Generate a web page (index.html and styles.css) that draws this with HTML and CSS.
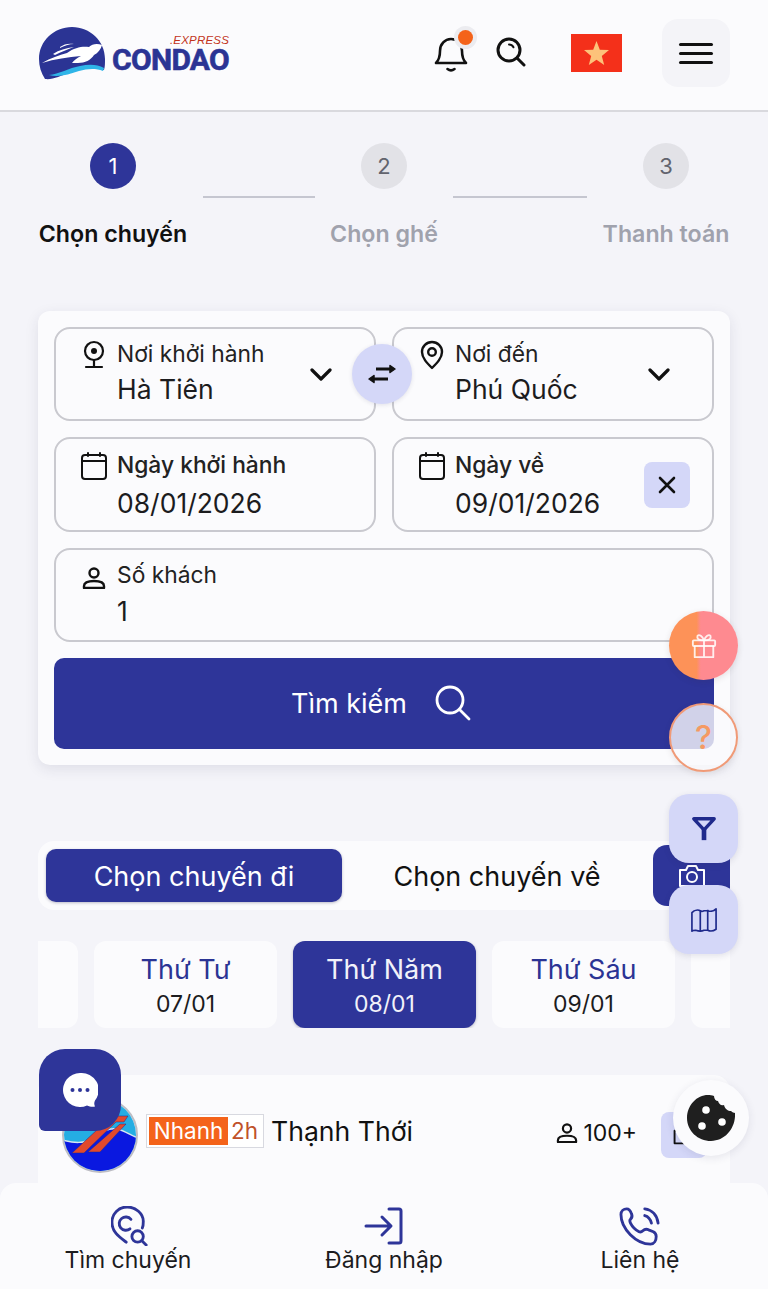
FILE: index.html
```html
<!DOCTYPE html>
<html lang="vi">
<head>
<meta charset="utf-8">
<title>Condao Express</title>
<link rel="stylesheet" href="styles.css">
</head>
<body>
<div class="page">
  <header class="header">
    <div class="logo">
      <svg class="logo-mark" viewBox="0 0 66 53" aria-hidden="true">
        <path d="M33 0C15 0 0 14 0 32c0 7 2 14 6 20 8 1 15-3 26-7 12-4 22-5 33-2 1-3 1-7 1-11C66 14 51 0 33 0z" fill="#2b3494"/>
        <path d="M10 48c10-1 20-7 31-9 9-2 17-2 24 2l-1 3c-8-3-16-2-24 0-10 3-20 7-30 4z" fill="#2fb5e8"/>
        <path d="M3 36c9-5 17-8 25-10 8-6 16-7 22-6 3-3 8-4 13-2-1 4-4 8-8 10-3 5-9 8-16 8h-6c2-3 5-5 9-7-13 1-26 3-39 7z" fill="#fff"/>
        <path d="M14 27c6-4 13-6 21-7-6 2-13 5-19 8zM21 20c4-3 9-4 14-3-5 0-10 2-14 4z" fill="#fff"/>
      </svg>
      <div class="logo-text">
        <span class="logo-express">.EXPRESS</span>
        <span class="logo-name">CONDAO</span>
      </div>
    </div>
    <div class="header-tools">
      <button class="icon-plain bell">
        <svg viewBox="0 0 34 36" width="34" height="36" fill="none" stroke="#111" stroke-width="2.600" stroke-linecap="round" stroke-linejoin="round"><path d="M2 27h30c-3-3-4-6-4-12 0-7-5-12-11-12S6 8 6 15c0 6-1 9-4 12z"/><path d="M13.500 33c2 1.500 5 1.500 7 0"/></svg>
        <span class="bell-dot"></span>
      </button>
      <button class="icon-plain search">
        <svg viewBox="0 0 30 30" width="30" height="30" fill="none" stroke="#111" stroke-width="3" stroke-linecap="round"><circle cx="13" cy="13" r="11"/><path d="M21 21l7 7"/><path d="M13 7.500c2 0 3.500 1 4.500 2.800" stroke-width="2"/></svg>
      </button>
      <svg class="flag" viewBox="0 0 51 38" aria-hidden="true"><rect width="51" height="38" fill="#f4301a"/><path d="M25.500 7l3.300 8.700 9.200.4-7.200 5.800 2.400 9-7.700-5.100-7.700 5.100 2.400-9-7.200-5.800 9.200-.4z" fill="#fdc27a"/></svg>
      <button class="menu-btn"><span></span><span></span><span></span></button>
    </div>
  </header>

  <main class="main">
    <section class="stepper">
      <div class="step active"><span class="step-num">1</span><span class="step-label">Chọn chuyến</span></div>
      <div class="step-line"></div>
      <div class="step"><span class="step-num">2</span><span class="step-label">Chọn ghế</span></div>
      <div class="step-line"></div>
      <div class="step"><span class="step-num">3</span><span class="step-label">Thanh toán</span></div>
    </section>

    <section class="search-card">
      <div class="field-grid">
        <div class="field">
          <svg class="field-icon" viewBox="0 0 26 30" fill="none" stroke="#111" stroke-width="2.200" stroke-linecap="round"><circle cx="13" cy="11" r="9"/><circle cx="13" cy="11" r="3" fill="#111" stroke="none"/><path d="M13 20v6M5 27h16"/></svg>
          <div class="field-text"><span class="field-label">Nơi khởi hành</span><span class="field-value">Hà Tiên</span></div>
          <svg class="chevron" viewBox="0 0 24 14" fill="none" stroke="#111" stroke-width="3.200" stroke-linecap="round" stroke-linejoin="round"><path d="M3 3l9 9 9-9"/></svg>
        </div>
        <div class="field">
          <svg class="field-icon" viewBox="0 0 26 30" fill="none" stroke="#111" stroke-width="2.400" stroke-linejoin="round"><path d="M13 28C8 23 3 18 3 12a10 10 0 0 1 20 0c0 6-5 11-10 16z"/><circle cx="13" cy="12" r="3.800"/></svg>
          <div class="field-text"><span class="field-label">Nơi đến</span><span class="field-value">Phú Quốc</span></div>
          <svg class="chevron" viewBox="0 0 24 14" fill="none" stroke="#111" stroke-width="3.200" stroke-linecap="round" stroke-linejoin="round"><path d="M3 3l9 9 9-9"/></svg>
        </div>
        <button class="swap">
          <svg viewBox="0 0 30 24" width="30" height="24" fill="#111" stroke="#111" stroke-width="3"><path d="M9 7h14" fill="none"/><path d="M23 3.500L28 7l-5 3.500z" stroke-width="1.500" stroke-linejoin="round"/><path d="M21 17H7" fill="none"/><path d="M7 13.500L2 17l5 3.500z" stroke-width="1.500" stroke-linejoin="round"/></svg>
        </button>
        <div class="field date">
          <svg class="field-icon" viewBox="0 0 26 28" fill="none" stroke="#111" stroke-width="2" stroke-linecap="round"><rect x="1" y="3" width="24" height="24" rx="3"/><path d="M1 9h24M7 1v3M19 1v3"/></svg>
          <div class="field-text"><span class="field-label">Ngày khởi hành</span><span class="field-value">08/01/2026</span></div>
        </div>
        <div class="field date">
          <svg class="field-icon" viewBox="0 0 26 28" fill="none" stroke="#111" stroke-width="2" stroke-linecap="round"><rect x="1" y="3" width="24" height="24" rx="3"/><path d="M1 9h24M7 1v3M19 1v3"/></svg>
          <div class="field-text"><span class="field-label">Ngày về</span><span class="field-value">09/01/2026</span></div>
          <button class="clear-btn"><svg viewBox="0 0 18 18" width="18" height="18" fill="none" stroke="#111" stroke-width="2.600" stroke-linecap="round"><path d="M2 2l14 14M16 2L2 16"/></svg></button>
        </div>
        <div class="field guests">
          <svg class="field-icon person" viewBox="0 0 24 22" fill="none" stroke="#111" stroke-width="2.400" stroke-linejoin="round"><circle cx="12" cy="6" r="4.500"/><path d="M2 21v-2c0-3 3-5 10-5s10 2 10 5v2z"/></svg>
          <div class="field-text"><span class="field-label">Số khách</span><span class="field-value">1</span></div>
        </div>
      </div>
      <button class="search-btn">
        <span>Tìm kiếm</span>
        <svg viewBox="0 0 36 36" width="36" height="36" fill="none" stroke="#fff" stroke-width="2.800" stroke-linecap="round"><circle cx="15" cy="15" r="13"/><path d="M24.500 24.500L34 34"/></svg>
      </button>
    </section>

    <section class="tabs">
      <button class="tab on">Chọn chuyến đi</button>
      <button class="tab">Chọn chuyến về</button>
      <button class="camera-btn">
        <svg viewBox="0 0 28 24" width="28" height="24" fill="none" stroke="#fff" stroke-width="2" stroke-linejoin="round"><path d="M2 6h6l2-4h8l2 4h6v16H2z"/><circle cx="14" cy="13" r="5"/></svg>
      </button>
    </section>

    <section class="days">
      <div class="day"></div>
      <div class="day"><span class="day-name">Thứ Tư</span><span class="day-date">07/01</span></div>
      <div class="day on"><span class="day-name">Thứ Năm</span><span class="day-date">08/01</span></div>
      <div class="day"><span class="day-name">Thứ Sáu</span><span class="day-date">09/01</span></div>
      <div class="day"></div>
    </section>

    <section class="trip">
      <svg class="trip-logo" viewBox="0 0 76 76" aria-hidden="true">
        <defs><clipPath id="tc"><circle cx="38" cy="38" r="36"/></clipPath></defs>
        <circle cx="38" cy="38" r="37" fill="#fff" stroke="#bdbdc4" stroke-width="2"/>
        <g clip-path="url(#tc)">
          <rect width="76" height="76" fill="#25ade3"/>
          <path d="M0 43c12 3 22 4 32-2 8-6 14-10 22-9 8 1 14 6 22 9v35H0z" fill="#0a18e0"/>
          <path d="M0 43c12 3 22 4 32-2 8-6 14-10 22-9 8 1 14 6 22 9" fill="none" stroke="#d7e6f2" stroke-width="1.500"/>
        </g>
        <path d="M10 56L50 19h16l-4 6H54L22 56zM26 55l32-28h6L38 55z" fill="#e2492c" stroke="#1b2a8c" stroke-width=".5"/>
      </svg>
      <div class="badge"><span class="badge-a">Nhanh</span><span class="badge-b">2h</span></div>
      <span class="trip-name">Thạnh Thới</span>
      <div class="seats">
        <svg viewBox="0 0 24 22" width="22" height="20" fill="none" stroke="#111" stroke-width="2.400" stroke-linejoin="round"><circle cx="12" cy="6" r="4.500"/><path d="M2 21v-2c0-3 3-5 10-5s10 2 10 5v2z"/></svg>
        <span>100+</span>
      </div>
      <button class="trip-btn">
        <svg viewBox="0 0 28 24" width="22" height="19" fill="none" stroke="#111" stroke-width="2.400" stroke-linejoin="round"><path d="M2 6h6l2-4h8l2 4h6v16H2z"/><circle cx="14" cy="13" r="5"/></svg>
      </button>
    </section>
  </main>

  <nav class="bottom-nav">
    <a class="nav-item">
      <svg class="nav-pin" viewBox="0 0 40 42" width="38" height="40" fill="none" stroke="#2e3599" stroke-width="3" stroke-linecap="round"><path d="M16 38C8 32 1 27 1 17 1 8 8 1 17 1s17 7 17 15c0 2 0 5-1 7"/><path d="M21 14a7 7 0 1 0-1 10"/><circle cx="28" cy="32" r="6"/><path d="M32.500 36.500L37 41"/></svg>
      <span>Tìm chuyến</span>
    </a>
    <a class="nav-item">
      <svg viewBox="0 0 40 40" width="40" height="40" fill="none" stroke="#2e3599" stroke-width="3" stroke-linecap="round" stroke-linejoin="round"><path d="M25 3h10a2 2 0 0 1 2 2v30a2 2 0 0 1-2 2H25"/><path d="M2 20h24M18 11l9 9-9 9"/></svg>
      <span>Đăng nhập</span>
    </a>
    <a class="nav-item">
      <svg viewBox="0 0 44 42" width="44" height="40" fill="none" stroke="#2e3599" stroke-width="3" stroke-linecap="round" stroke-linejoin="round"><path d="M2 9c0-4 3-6 6-6 3 0 4 2 5 5 1 2 1 4-1 6-1 1-1 2 0 4 2 4 5 7 9 9 2 1 3 0 4-1 2-2 4-2 6-1l5 2c2 1 3 2 3 5 0 4-2 8-6 8C18 40 2 24 2 9z"/><path d="M27 10c4 1 6 4 7 8M27 3c8 1 13 7 14 15"/></svg>
      <span>Liên hệ</span>
    </a>
  </nav>

  <button class="float gift">
    <svg viewBox="0 0 28 28" width="26" height="26" fill="none" stroke="#fff" stroke-width="2" stroke-linejoin="round" stroke-opacity=".85"><rect x="2" y="8" width="24" height="6" rx="1"/><path d="M4 14v12h20V14M14 8v18M14 8c-6 0-8-2-7-5 2-2 6 1 7 5zM14 8c6 0 8-2 7-5-2-2-6 1-7 5z"/></svg>
  </button>
  <button class="float help">?</button>
  <button class="float filter">
    <svg viewBox="0 0 28 28" width="26" height="26" fill="none" stroke="#1f2a8c" stroke-width="3.600" stroke-linejoin="round"><path d="M3 3h22l-11 12z"/><path d="M14 14v12" stroke-width="5"/></svg>
  </button>
  <button class="float map">
    <svg viewBox="0 0 30 28" width="30" height="26" fill="none" stroke="#1f2a8c" stroke-width="1.800" stroke-linejoin="round"><path d="M2 6c3-3 7-3 9-2 1 1 2 1 4 0l4 0c2 1 6 1 9-2v22c-3 2-7 2-9 1h-4c-2 1-6 1-9 0-2 0-3 0-4 1z"/><path d="M11 4v22M19 3v22"/></svg>
  </button>
  <button class="float chat">
    <svg viewBox="0 0 36 36" width="36" height="36"><path d="M18 1a17 17 0 1 0 7 32.500c3 1.500 6 1.500 8 1-1-2-1-4 0-6A17 17 0 0 0 18 1z" fill="#fff"/><circle cx="10.500" cy="18" r="2" fill="#2e3599"/><circle cx="18" cy="18" r="2" fill="#2e3599"/><circle cx="25.500" cy="18" r="2" fill="#2e3599"/></svg>
  </button>
  <button class="float cookie">
    <svg viewBox="0 0 48 48" width="48" height="48"><path d="M21 1c2 0 4 0 6 1 0 3 2 5 4 5 1 3 3 5 6 4 1 4 4 6 7 6 1 1 3 2 4 2 1 14-9 28-24 28C11 47 0 37 0 24 0 11 10 1 21 1z" fill="#1f1f1f"/><circle cx="19" cy="16" r="3.800" fill="#fff"/><circle cx="15" cy="32" r="3.800" fill="#fff"/><circle cx="35" cy="28" r="3.800" fill="#fff"/></svg>
  </button>
</div>
</body>
</html>
```

FILE: styles.css
```css
* { box-sizing: border-box; }
html, body { margin: 0; padding: 0; }
body { font-family: Inter, "Noto Sans", sans-serif; color: #111; background: #f4f4f9; }
button { font: inherit; border: 0; padding: 0; background: none; color: inherit; }
.page { position: relative; width: 768px; height: 1289px; overflow: hidden; background: #f4f4f9; }

.header { height: 112px; padding: 19px 38px 0; display: flex; justify-content: space-between; align-items: flex-start; background: #fbfbfd; border-bottom: 2px solid #d9d9de; }
.logo { display: flex; align-items: flex-end; gap: 7px; margin: 8px 0 0 1px; }
.logo-mark { width: 66px; height: 53px; display: block; }
.logo-text { display: flex; flex-direction: column; align-items: flex-end; gap: 2px; margin-bottom: 8px; }
.logo-express { font: italic 500 11.500px/11px "Liberation Sans", sans-serif; color: #c2331a; letter-spacing: .2px; }
.logo-name { font: 700 30px/24px Roboto, sans-serif; color: #2b3494; letter-spacing: -.7px; -webkit-text-stroke: .6px #2b3494; }
.header-tools { display: flex; align-items: flex-start; }
.icon-plain { display: block; position: relative; }
.bell { width: 34px; height: 36px; margin-top: 17px; }
.bell svg, .search svg { display: block; }
.bell-dot { position: absolute; top: -6px; left: 24px; width: 15px; height: 15px; border-radius: 50%; background: #f4631a; box-shadow: 0 0 0 4px #ececf0; }
.search { width: 30px; height: 30px; margin: 18px 0 0 28px; }
.flag { width: 51px; height: 38px; margin: 15px 0 0 45px; display: block; }
.menu-btn { width: 68px; height: 68px; margin-left: 40px; border-radius: 16px; background: #f4f4f8; display: flex; flex-direction: column; align-items: center; justify-content: center; gap: 6px; }
.menu-btn span { width: 34px; height: 3px; background: #111; border-radius: 2px; }

.main { padding: 31px 38px 0; }
.stepper { display: grid; grid-template-columns: 148px 112px 106px 134px 126px; column-gap: 16px; align-items: start; margin-left: 1px; }
.step { display: flex; flex-direction: column; align-items: center; gap: 30px; }
.step-num { width: 46px; height: 46px; border-radius: 50%; background: #e2e2e7; color: #62646e; display: flex; align-items: center; justify-content: center; font-size: 22px; }
.step-label { font-size: 23.200px; line-height: 30px; font-weight: 600; color: #a0a2ad; white-space: nowrap; }
.step.active .step-num { background: #2e3599; color: #fff; }
.step.active .step-label { color: #111; }
.step-line { height: 2px; margin-top: 53px; background: #c5c6d0; }

.search-card { margin-top: 62px; padding: 16px; height: 454px; border-radius: 12px; background: #fbfbfd; box-shadow: 0 4px 14px rgba(40,40,80,.1); }
.field-grid { position: relative; display: grid; grid-template-columns: 1fr 1fr; gap: 16px; }
.field { position: relative; height: 94.250px; padding: 10px 30px 0 25px; display: flex; align-items: flex-start; border: 2px solid #c9c9cf; border-radius: 16px; }
.field.date { padding-top: 11px; }
.field-icon { width: 26px; height: 30px; margin-top: 1px; flex: none; }
.field.date .field-icon { height: 28px; margin-top: 2px; }
.field.guests .field-icon { height: 22px; margin-top: 7px; }
.field-text { margin-left: 10px; display: flex; flex-direction: column; }
.field-label { font-size: 22.800px; line-height: 30px; color: #222; }
.field-value { font-size: 26.500px; line-height: 34px; margin-top: 3px; color: #1c1c1e; }
.field.date .field-value { margin-top: 6px; }
.field.date .field-label { font-weight: 500; }
.field.guests .field-value { margin-top: 4px; }
.chevron { width: 24px; height: 14px; position: absolute; right: 41px; top: 38px; }
.swap { position: absolute; left: 298px; top: 17px; width: 60px; height: 60px; border-radius: 50%; background: #d4d7f8; display: flex; align-items: center; justify-content: center; box-shadow: 0 1px 4px rgba(40,40,80,.12); }
.clear-btn { position: absolute; right: 22px; top: 23px; width: 46px; height: 46px; border-radius: 8px; background: #d4d7f8; display: flex; align-items: center; justify-content: center; }
.guests { grid-column: 1 / 3; }
.search-btn { margin-top: 16px; width: 100%; height: 91px; padding-right: 6px; border-radius: 10px; background: #2e3599; color: #fff; font-size: 27px; display: flex; align-items: center; justify-content: center; gap: 28px; }

.tabs { position: relative; margin-top: 76px; height: 69px; padding: 8px; display: flex; align-items: flex-start; border-radius: 16px; background: #fbfbfd; }
.tab { width: 296px; height: 53px; padding-top: 2px; border-radius: 10px; font-size: 27px; }
.tab + .tab { width: 310px; }
.tab.on { background: #2e3599; color: #fff; box-shadow: 0 1px 3px rgba(40,40,80,.3); }
.camera-btn { position: absolute; right: 0; top: 4px; width: 77px; height: 61px; border-radius: 14px 0 0 14px; background: #2e3599; display: flex; align-items: center; justify-content: center; }

.days { margin-top: 31px; height: 87px; display: flex; gap: 16px; overflow: hidden; }
.day { flex: none; width: 183px; height: 87px; padding-top: 3px; border-radius: 12px; background: #fbfbfd; display: flex; flex-direction: column; align-items: center; justify-content: center; }
.day:first-child { margin-left: -143px; }
.day-name { font-size: 27px; line-height: 32px; color: #2b3494; }
.day-date { font-size: 23px; line-height: 30px; margin-top: 3px; color: #1c1c1e; }
.day.on { background: #2e3599; box-shadow: 0 1px 3px rgba(40,40,80,.3); }
.day.on .day-name, .day.on .day-date { color: #f2f2fa; }

.trip { margin-top: 47px; height: 220px; padding: 22px 23px 0 24px; display: flex; align-items: flex-start; border-radius: 16px; background: #fbfbfd; }
.trip-logo { width: 76px; height: 76px; flex: none; }
.badge { margin: 17px 0 0 8px; height: 34px; width: 118px; flex: none; padding: 2px; display: flex; border: 1px solid #d8d9e0; background: #fff; font-size: 22.500px; line-height: 28px; }
.badge-a { flex: 0 0 79px; background: #f4631a; color: #fff; text-align: center; }
.badge-b { flex: 1; color: #c0522a; text-align: center; }
.trip-name { margin: 15px 0 0 7px; font-size: 26.600px; line-height: 38px; white-space: nowrap; }
.seats { margin: 21px 0 0 auto; display: flex; align-items: center; gap: 5px; font-size: 23px; line-height: 30px; }
.trip-btn { margin: 15px 0 0 24px; width: 46px; height: 46px; flex: none; border-radius: 8px; background: #d4d7f8; display: flex; align-items: center; justify-content: center; }

.bottom-nav { position: absolute; left: 0; right: 0; bottom: 0; height: 106px; padding-top: 23px; display: grid; grid-template-columns: repeat(3, 1fr); border-radius: 16px 16px 0 0; background: #fbfbfd; }
.nav-item { display: flex; flex-direction: column; align-items: center; font-size: 23px; line-height: 30px; color: #1c1c1e; }
.nav-item svg { display: block; margin-bottom: -1px; }
.nav-item .nav-pin { margin-left: 4px; }

.float { position: absolute; display: flex; align-items: center; justify-content: center; }
.gift { left: 669px; top: 611px; width: 69px; height: 69px; border-radius: 50%; background: linear-gradient(90deg, #fd9258 0 40%, #fe8a90 46%); box-shadow: 0 2px 6px rgba(60,40,40,.12); }
.help { left: 669px; top: 703px; width: 69px; height: 69px; border-radius: 50%; border: 2px solid #f09a77; background: rgba(250,250,252,.8); color: #f59a63; font: 500 32px/1 Inter, sans-serif; box-shadow: 0 2px 6px rgba(60,40,40,.1); }
.filter { left: 669px; top: 794px; width: 69px; height: 69px; border-radius: 20px; background: #d4d7f8; box-shadow: 0 2px 6px rgba(40,40,80,.12); }
.map { left: 669px; top: 885px; width: 69px; height: 69px; border-radius: 20px; background: #d4d7f8; box-shadow: 0 2px 6px rgba(40,40,80,.12); }
.chat { left: 39px; top: 1049px; width: 82px; height: 82px; border-radius: 26px 26px 26px 6px; background: #2e3599; }
.cookie { left: 673px; top: 1080px; width: 76px; height: 76px; border-radius: 50%; background: #fbfbfd; box-shadow: 0 2px 8px rgba(40,40,80,.1); }
```
